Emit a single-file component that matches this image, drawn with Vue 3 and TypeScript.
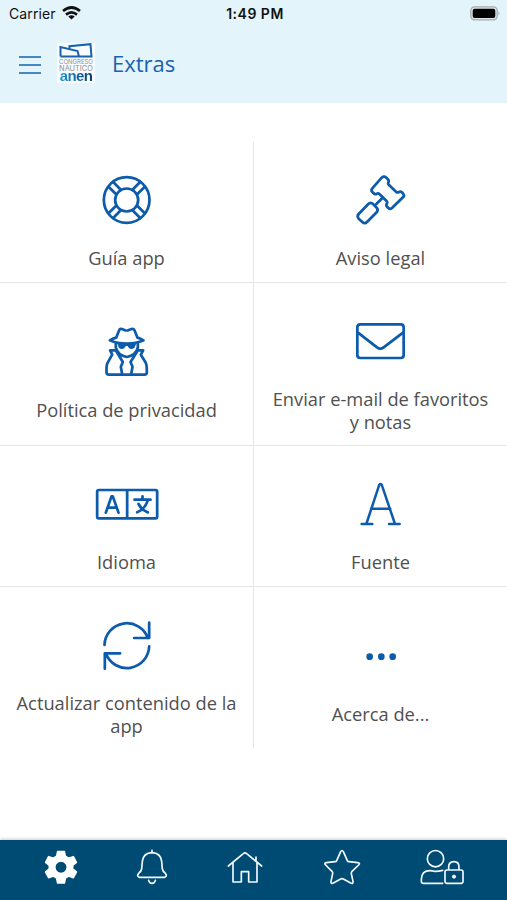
<script setup lang="ts">
interface Shape {
  d: string
  fill?: boolean
  thin?: boolean
}
interface Item {
  label: string
  viewBox: string
  shapes: Shape[]
}

const items: Item[] = [
  {
    label: 'Guía app',
    viewBox: '32.5 -3 216 216',
    shapes: [
      { d: 'M71 105a68.500 68.500 0 1 0 137 0a68.500 68.500 0 1 0 -137 0M105 105a34.500 34.500 0 1 0 69 0a34.500 34.500 0 1 0 -69 0' },
      { d: 'M85 65L108 88M99 51L122 74M194 65L171 88M180 51L157 74M85 145L108 122M99 159L122 136M194 145L171 122M180 159L157 136' },
    ],
  },
  {
    label: 'Aviso legal',
    viewBox: '44 -3 216 216',
    shapes: [
      { d: 'M154 38Q161 32 168 38L172 42Q177 47 174 53Q172 57 177 61L197 80Q201 84 206 81Q211 78 216 83L219 87Q223 92 218 97L185 129Q179 134 174 129L170 125Q166 120 170 115Q172 111 168 107L148 88Q144 84 140 86Q134 89 130 85L126 81Q121 76 126 70Z' },
      { d: 'M157 98L138 117M85 147L114 117Q121 110 128 117L139 128Q145 135 139 142L110 171Q103 178 96 171L85 161Q79 154 85 147Z' },
    ],
  },
  {
    label: 'Política de privacidad',
    viewBox: '32.5 4 216 216',
    shapes: [
      { d: 'M108 69L117 47Q119 41 125 43L135 47Q139 48 144 47L154 43Q160 41 163 47L172 69Q181 72 190 77Q168 87 140 87Q110 87 89 77Q99 71 108 69Z' },
      { d: 'M107 87V99Q113 123 140 127Q167 123 173 99V87' },
      { d: 'M112 87H168L163 99Q155 106 147 101L142 94H137L132 101Q124 106 116 99Z', fill: true },
      { d: 'M107 107H90L96 120L81 147Q79 152 79 168V173Q79 180 86 180H193Q200 180 200 173V168Q200 150 196 143L182 120L189 107H173M108 109L128 142L122 156L126 179M172 109L151 142L157 156L153 179' },
    ],
  },
  {
    label: 'Enviar e-mail de favoritos y notas',
    viewBox: '44 -17 216 216',
    shapes: [
      { d: 'M90 41H211Q220 41 220 50V133Q220 142 211 142H90Q81 142 81 133V50Q81 41 90 41ZM82 65L140 110Q150 118 160 110L219 65' },
    ],
  },
  {
    label: 'Idioma',
    viewBox: '31.5 -21 216 216',
    shapes: [
      { d: 'M55 45H225Q230 45 230 50V125Q230 130 225 130H55Q50 130 50 125V50Q50 45 55 45ZM140 45V130' },
      { d: 'M76 113L93 64H97L114 113M82 98H108M186 64V74M162 74H210M202 76Q193 103 170 112M174 87Q184 106 202 112' },
    ],
  },
  {
    label: 'Fuente',
    viewBox: '44 -21 216 216',
    shapes: [{ d: 'M108 147L147 29Q150 25 154 29L194 147M122 101H180M94 147H126M176 147H208', thin: true }],
  },
  {
    label: 'Actualizar contenido de la app',
    viewBox: '32.5 -6 216 216',
    shapes: [{ d: 'M73 102A67 67 0 0 1 203 81M207 35V81H162M207 106A67 67 0 0 1 77 127M74 173V127H120' }],
  },
  {
    label: 'Acerca de...',
    viewBox: '43 -46 216 216',
    shapes: [
      { d: 'M107 64a10 10 0 1 0 20 0a10 10 0 1 0 -20 0M142 64a10 10 0 1 0 20 0a10 10 0 1 0 -20 0M176 64a10 10 0 1 0 20 0a10 10 0 1 0 -20 0', fill: true },
    ],
  },
]
</script>

<template>
  <div class="screen">
    <header class="top">
      <div class="status">
        <div class="carrier">
          <span>Carrier</span>
          <svg width="19" height="14" viewBox="0 0 19 14" fill="none" stroke="#111" stroke-width="2.700">
            <path d="M1 5Q9.500 -2 18 5M4 8.600Q9.500 4.200 15 8.600" />
            <path d="M9.500 13.500L6.300 10.600Q9.500 8 12.700 10.600Z" fill="#111" stroke="none" />
          </svg>
        </div>
        <strong class="time">1:49 PM</strong>
        <svg class="battery" width="31" height="15" viewBox="0 0 31 15">
          <rect x="0.800" y="0.800" width="26.400" height="13" rx="3.800" fill="#dce5e9" stroke="#a5adb1" stroke-width="1.300" />
          <rect x="2.700" y="2.700" width="22.600" height="9.200" rx="2" fill="#000" />
          <path d="M28.500 5V9.600Q30.600 7.300 28.500 5Z" fill="#a5adb1" />
        </svg>
      </div>
      <div class="title-row">
        <svg class="menu" width="22" height="18" viewBox="0 0 22 18" stroke="#1464ae" stroke-width="1.700">
          <path d="M0 1H22M0 9H22M0 17H22" />
        </svg>
        <div class="logo">
          <svg width="34" height="15" viewBox="0 0 34 15" fill="none" stroke="#1763ad" stroke-width="2">
            <path d="M1.500 13.500V4L18.500 8L20 13.500M10.500 5.500V3.200L31.500 1.200L32.500 13.500H1.500" />
          </svg>
          <span class="congress">CONGRESO</span>
          <span class="nautico">NÁUTICO</span>
          <b>anen</b>
        </div>
        <h1>Extras</h1>
      </div>
    </header>

    <main class="grid">
      <div v-for="item in items" :key="item.label" class="cell">
        <svg class="icon" :viewBox="item.viewBox">
          <path v-for="(s, i) in item.shapes" :key="i" :d="s.d" :class="{ solid: s.fill, thin: s.thin }" />
        </svg>
        <span class="label">{{ item.label }}</span>
      </div>
    </main>

    <nav class="tabs">
      <svg viewBox="112 48 144 144">
        <path
          fill="#fff" stroke="#fff" stroke-width="5" stroke-linejoin="round" fill-rule="evenodd"
          d="M174 65H194L197 79L207 85L221 80L230 97L219 106V117L230 126L221 143L207 138L197 144L194 159H174L171 144L161 138L147 143L138 126L149 117V106L138 97L147 80L161 85L171 79ZM184 93a19 19 0 1 0 0.100 0Z"
        />
      </svg>
      <svg viewBox="384 48 144 144">
        <path d="M456 61V68M456 68Q430 69 427 94L425 117Q424 123 416 130Q409 138 418 142H494Q503 138 496 130Q488 123 487 117L485 94Q482 69 456 68ZM446 151Q448 160 456 160Q464 160 466 151" />
      </svg>
      <svg viewBox="663 48 144 144">
        <path d="M685 108L730 71Q735 66 740 71L785 108M699 98V156H724V125H746V156H771V98M768 93V81" />
      </svg>
      <svg viewBox="196 48 144 144">
        <path d="M264 65Q268 58 272 65L284 92Q285 95 289 95L315 98Q324 99 318 105L298 124Q295 127 296 131L301 154Q302 163 294 159L272 147Q268 145 264 147L242 159Q234 163 235 154L240 131Q241 127 238 124L219 105Q213 99 221 98L247 95Q251 95 252 92Z" />
      </svg>
      <svg viewBox="495 48 144 144">
        <path d="M523 86a24.500 24.500 0 1 0 49 0a24.500 24.500 0 1 0 -49 0M569 160H511Q505 160 505 154V149Q505 122 531 122Q538 122 544 124Q554 125 569 121M582 120H624Q630 120 630 126V154Q630 160 624 160H582Q576 160 576 154V126Q576 120 582 120ZM587 119V111Q587 95 603 95Q618 95 618 111V119" />
        <circle cx="603" cy="140" r="5" fill="#fff" stroke="#fff" stroke-width="2" />
      </svg>
    </nav>
  </div>
</template>

<style>
body {
  margin: 0;
  background: #fff;
}
</style>

<style scoped>
.screen {
  width: 507px;
  height: 900px;
  display: flex;
  flex-direction: column;
  overflow: hidden;
  background: #fff;
  font-family: 'Open Sans', 'Noto Sans', sans-serif;
}
.top {
  height: 103px;
  flex: none;
  background: #e4f4fb;
}
.status {
  height: 27px;
  display: grid;
  grid-template-columns: 1fr auto 1fr;
  align-items: center;
  padding: 0 6px 0 9px;
  font-family: Inter, sans-serif;
  font-size: 14px;
  color: #111;
}
.carrier {
  display: flex;
  align-items: center;
  gap: 6px;
  letter-spacing: 0.1px;
}
.carrier svg {
  margin-top: -2px;
}
.time {
  font-weight: 600;
  letter-spacing: 0.5px;
}
.battery {
  justify-self: end;
}
.title-row {
  height: 76px;
  display: flex;
  align-items: center;
  padding-left: 19px;
  box-sizing: border-box;
}
.menu {
  margin-right: 16px;
}
.logo {
  width: 38px;
  height: 40px;
  display: flex;
  flex-direction: column;
  align-items: center;
  margin: -5px 17px 0 0;
  background: #f9fcfe;
  font-family: Inter, sans-serif;
  white-space: nowrap;
  color: #8b9196;
}
.logo svg {
  flex: none;
}
.congress {
  font-size: 6px;
  line-height: 7px;
}
.nautico {
  font-size: 7.4px;
  line-height: 7px;
}
.logo b {
  font-family: 'Liberation Sans', sans-serif;
  font-size: 15px;
  font-weight: 700;
  line-height: 10px;
  letter-spacing: -0.6px;
  margin-top: -1px;
  padding-bottom: 2px;
  background: linear-gradient(90deg, #189bd0, #126ba9 50%, #083d68);
  background-clip: text;
  color: transparent;
}
h1 {
  margin: 0 0 5px;
  font-size: 22px;
  line-height: 30px;
  font-weight: 400;
  color: #1763ad;
}
.grid {
  flex: 1;
  display: grid;
  grid-template-columns: 254px 253px;
  grid-template-rows: 141px 163px 141px 161px;
  padding-top: 39px;
}
.cell {
  display: flex;
  flex-direction: column;
  align-items: center;
  justify-content: center;
  padding: 0 14px;
  border-bottom: 1px solid #e6e6e6;
}
.cell:nth-child(odd) {
  border-right: 1px solid #e6e6e6;
}
.cell:nth-last-child(-n + 2) {
  border-bottom: 0;
  padding-top: 1px;
}
.icon {
  width: 72px;
  height: 72px;
  margin: 10px 0;
  flex: none;
  fill: none;
  stroke: #0d5cab;
  stroke-width: 8.2;
  stroke-linecap: round;
  stroke-linejoin: round;
}
.icon .solid {
  fill: #0d5cab;
  stroke: none;
}
.icon .thin {
  stroke-width: 7.5;
}
.label {
  font-size: 18.3px;
  line-height: 23.5px;
  text-align: center;
  color: #505050;
}
.tabs {
  height: 60px;
  flex: none;
  display: grid;
  grid-template-columns: 90px 92px 94px 100px 100px;
  padding-left: 16px;
  box-sizing: border-box;
  place-items: center;
  background: #004b74;
  box-shadow: 0 -1px 3px rgba(0, 0, 0, 0.2);
}
.tabs svg {
  width: 48px;
  height: 48px;
  fill: none;
  stroke: #f4faff;
  stroke-width: 5;
  stroke-linecap: round;
  stroke-linejoin: round;
}
</style>
